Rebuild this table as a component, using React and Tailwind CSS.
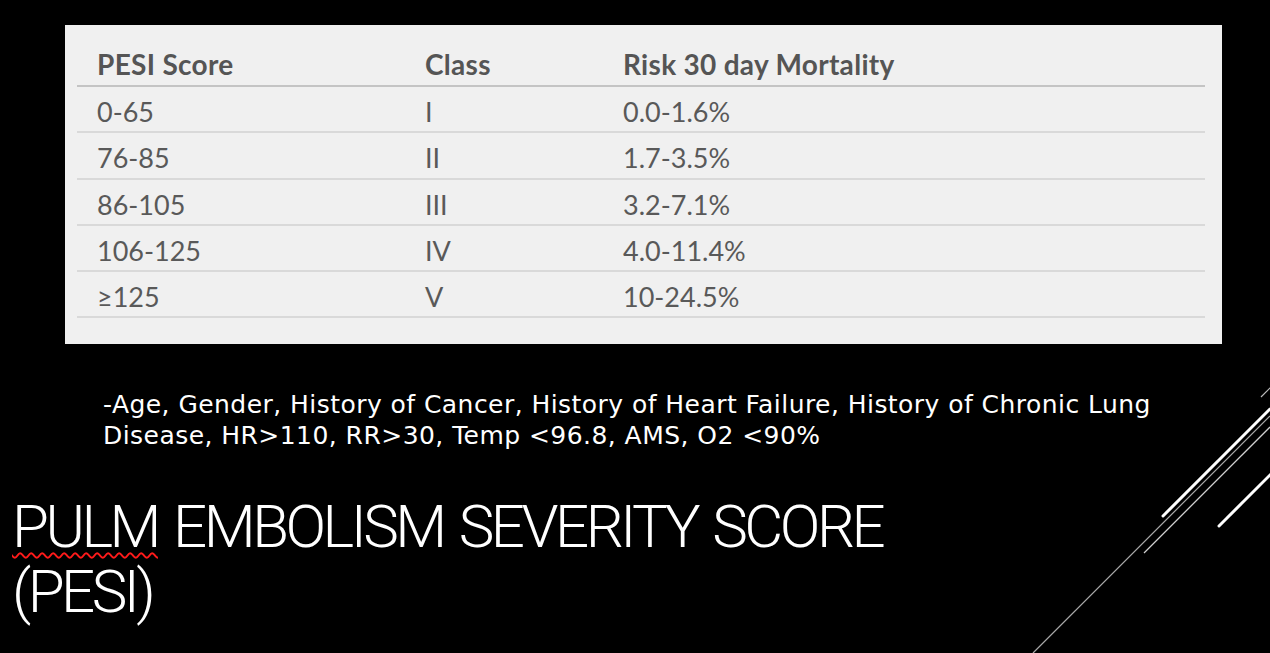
import React from 'react';

const rows = [
  ['0-65', 'I', '0.0-1.6%'],
  ['76-85', 'II', '1.7-3.5%'],
  ['86-105', 'III', '3.2-7.1%'],
  ['106-125', 'IV', '4.0-11.4%'],
  ['≥125', 'V', '10-24.5%'],
];

function Slashes() {
  return (
    <svg className="absolute inset-0 pointer-events-none" width="1270" height="653" viewBox="0 0 1270 653">
      <line x1="1033" y1="653" x2="1270" y2="416" stroke="#a8a8a8" strokeWidth="1.2" />
      <line x1="1163" y1="516" x2="1270" y2="409" stroke="#fff" strokeWidth="3" strokeLinecap="round" />
      <line x1="1144" y1="553" x2="1270" y2="427" stroke="#d0d0d0" strokeWidth="1.3" />
      <line x1="1219" y1="526" x2="1272" y2="473" stroke="#fff" strokeWidth="3" strokeLinecap="round" />
      <line x1="1261" y1="397" x2="1271" y2="387" stroke="#bbb" strokeWidth="1.2" />
    </svg>
  );
}

export default function App() {
  return (
    <div className="relative w-[1270px] h-[653px] bg-black overflow-hidden">
      <div className="pt-[25px] pl-[65px]">
        <div className="w-[1157px] h-[319px] bg-[#f0f0f0] pl-[12px] pr-[17px] font-['Lato',sans-serif] text-[#595959]">
          <div className="h-[62px] border-b-2 border-[#c4c4c4] grid grid-cols-[348px_198px_1fr] items-end pb-0 text-[28px] font-bold text-[#555] tracking-[0.3px]">
            <div className="pl-[20px]">PESI Score</div>
            <div>Class</div>
            <div>Risk 30 day Mortality</div>
          </div>
          {rows.map((r) => (
            <div key={r[0]} className="h-[46.3px] border-b-2 border-[#d9d9d9] grid grid-cols-[348px_198px_1fr] items-center pt-[5px] text-[27px]">
              <div className="pl-[20px]">{r[0]}</div>
              <div>{r[1]}</div>
              <div>{r[2]}</div>
            </div>
          ))}
        </div>
      </div>

      <div className="pl-[103px] pt-[45px] text-white text-[25px] leading-[31px] tracking-[0.45px] font-['DejaVu_Sans',sans-serif] w-[1180px]">
        -Age, Gender, History of Cancer, History of Heart Failure, History of Chronic Lung Disease, HR&gt;110, RR&gt;30, Temp &lt;96.8, AMS, O2 &lt;90%
      </div>

      <div className="pl-[12px] pt-[43px] text-white text-[60px] leading-[65px] font-light tracking-[-3.5px] [word-spacing:4px] font-['Roboto',sans-serif]">
        <div>
          <span className="underline decoration-wavy decoration-[#ff1a1a] decoration-2 underline-offset-[5px]">PULM</span> EMBOLISM SEVERITY SCORE
        </div>
        <div>(PESI)</div>
      </div>

      <Slashes />
    </div>
  );
}
